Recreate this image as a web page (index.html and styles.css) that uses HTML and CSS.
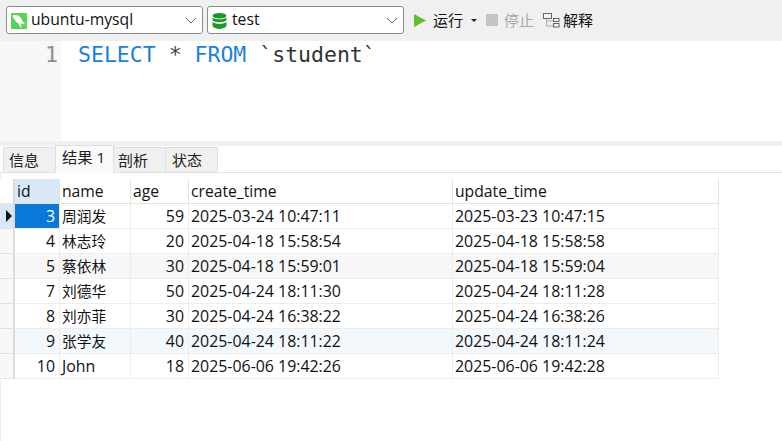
FILE: index.html
```html
<!DOCTYPE html>
<html lang="zh">
<head>
<meta charset="utf-8">
<title>ubuntu-mysql</title>
<link rel="stylesheet" href="styles.css">
</head>
<body>
<div class="toolbar">
  <div class="select conn">
    <svg class="sel-icon" width="16" height="16" viewBox="0 0 16 16"><rect width="16" height="16" rx="1" fill="#55d455"/><path d="M1.500 2.500c3-1 6-.5 8 2 1.500 2 2 4.500 4.500 6.500-1.500.5-3 0-4-1 0 1.500 0 3 1 4.500-2-.5-3-2-3.500-4C5 9.500 3 7 1.500 2.500z" fill="#fff"/></svg>
    <span class="sel-text">ubuntu-mysql</span>
    <svg class="chev" width="12" height="7" viewBox="0 0 12 7"><path d="M1 1l5 5 5-5" fill="none" stroke="#666" stroke-width="1"/></svg>
  </div>
  <div class="select db">
    <svg class="sel-icon" width="15" height="16" viewBox="0 0 15 16"><g fill="#1c9a28"><ellipse cx="7.500" cy="2.800" rx="7" ry="2.800"/><path d="M.5 4.500c2 2.400 12 2.400 14 0v2.700c-1.500 2.600-12.500 2.600-14 0z"/><path d="M.5 9c2 2.400 12 2.400 14 0v3.800c-1.500 4.200-12.500 4.200-14 0z"/></g></svg>
    <span class="sel-text">test</span>
    <svg class="chev" width="12" height="7" viewBox="0 0 12 7"><path d="M1 1l5 5 5-5" fill="none" stroke="#666" stroke-width="1"/></svg>
  </div>
  <div class="tool run">
    <svg width="12" height="13" viewBox="0 0 12 13"><path d="M0 0l12 6.500L0 13z" fill="#61bf2e"/></svg>
    <span>运行</span>
    <svg class="caret" width="6" height="3" viewBox="0 0 6 3"><path d="M0 0h6L3 3z" fill="#222"/></svg>
  </div>
  <div class="tool stop">
    <span class="stop-box"></span>
    <span>停止</span>
  </div>
  <div class="tool explain">
    <svg width="17" height="15" viewBox="0 0 17 15"><path d="M3.500 6v7h7M3.500 8h7" fill="none" stroke="#aaa"/><g fill="#f4f4f4" stroke="#666"><rect x=".5" y=".5" width="8" height="5"/><rect x="10.500" y="5.500" width="5.500" height="3"/><rect x="10.500" y="10.500" width="5.500" height="3.500"/></g></svg>
    <span>解释</span>
  </div>
</div>

<div class="editor">
  <div class="gutter">1</div>
  <div class="code"><span class="kw">SELECT</span> <span class="op">*</span> <span class="kw">FROM</span> `student`</div>
</div>

<div class="tabs">
  <div class="tab first-tab">信息</div>
  <div class="tab active">结果 1</div>
  <div class="tab third">剖析</div>
  <div class="tab">状态</div>
</div>

<div class="results">
  <table class="grid">
    <colgroup>
      <col class="c-mark"><col class="c-id"><col class="c-name"><col class="c-age"><col class="c-time"><col class="c-time2">
    </colgroup>
    <thead>
      <tr><th class="mark"></th><th class="head-id">id</th><th>name</th><th>age</th><th>create_time</th><th>update_time</th></tr>
    </thead>
    <tbody>
      <tr class="first"><td class="mark"><svg width="6" height="12" viewBox="0 0 6 12"><path d="M0 0l6 6-6 6z" fill="#111"/></svg></td><td class="num cur">3</td><td class="cjk">周润发</td><td class="num">59</td><td>2025-03-24 10:47:11</td><td>2025-03-23 10:47:15</td></tr>
      <tr><td class="mark"></td><td class="num">4</td><td class="cjk">林志玲</td><td class="num">20</td><td>2025-04-18 15:58:54</td><td>2025-04-18 15:58:58</td></tr>
      <tr class="alt"><td class="mark"></td><td class="num">5</td><td class="cjk">蔡依林</td><td class="num">30</td><td>2025-04-18 15:59:01</td><td>2025-04-18 15:59:04</td></tr>
      <tr><td class="mark"></td><td class="num">7</td><td class="cjk">刘德华</td><td class="num">50</td><td>2025-04-24 18:11:30</td><td>2025-04-24 18:11:28</td></tr>
      <tr><td class="mark"></td><td class="num">8</td><td class="cjk">刘亦菲</td><td class="num">30</td><td>2025-04-24 16:38:22</td><td>2025-04-24 16:38:26</td></tr>
      <tr class="hover"><td class="mark"></td><td class="num">9</td><td class="cjk">张学友</td><td class="num">40</td><td>2025-04-24 18:11:22</td><td>2025-04-24 18:11:24</td></tr>
      <tr><td class="mark"></td><td class="num">10</td><td>John</td><td class="num">18</td><td>2025-06-06 19:42:26</td><td>2025-06-06 19:42:28</td></tr>
    </tbody>
  </table>
</div>
</body>
</html>
```
FILE: styles.css
```css
* { box-sizing: border-box; }
html, body { margin: 0; height: 100%; overflow: hidden; }
body {
  background: #fff;
  color: #111;
  font: 15px/1 "Open Sans", "Noto Sans CJK SC", sans-serif;
  display: flex;
  flex-direction: column;
}
.toolbar {
  height: 41px;
  background: #f0f0f0;
  display: flex;
  align-items: flex-start;
  padding: 6px 0 0 6px;
  flex: none;
}
.select {
  width: 197px;
  height: 28px;
  background: #fff;
  border: 1px solid #8c8c8c;
  border-radius: 3px;
  display: flex;
  align-items: center;
  padding-left: 4px;
  margin-right: 4px;
  font-size: 15.700px;
}
.sel-icon { margin-top: 2px; }
.sel-text { margin-left: 4px; flex: 1; }
.db .sel-text { margin-left: 5px; }
.chev { margin-right: 5px; }
.tool {
  display: flex;
  align-items: center;
  height: 28px;
  font-size: 15px;
}
.run { margin-left: 6px; gap: 7px; }
.caret { margin-left: 1px; }
.stop { margin-left: 9px; gap: 6px; color: #aaa; }
.stop-box { width: 12px; height: 12px; background: #c4c4c4; }
.explain { margin-left: 9px; gap: 3px; }
.editor {
  height: 100px;
  display: flex;
  flex: none;
  font: 21.500px/28px "DejaVu Sans Mono", monospace;
}
.gutter {
  width: 61px;
  background: #f7f7f7;
  color: #8e8e8e;
  text-align: right;
  padding: 0 3px 0 0;
}
.code { padding-left: 17px; color: #333; white-space: pre; }
.kw { color: #1a7fe0; }
.op { color: #444; }
.tabs {
  height: 32px;
  flex: none;
  background: #fff;
  border-top: 5px solid #f0f0f0;
  border-bottom: 1px solid #e2e2e2;
  display: flex;
  align-items: flex-end;
  padding-left: 3px;
}
.tab {
  width: 53px;
  height: 26px;
  margin-bottom: -1px;
  margin-right: -1px;
  padding-left: 6px;
  background: #f0f0f0;
  border: 1px solid #e0e0e0;
  display: flex;
  align-items: center;
  color: #222;
}
.tab.first-tab { padding-left: 5px; }
.tab.active {
  width: 59px;
  height: 28px;
  padding-left: 6px;
  padding-bottom: 3px;
  background: #fafafa;
  border-bottom-color: #fafafa;
  font-size: 15.300px;
}
.tab.third { padding-left: 4px; }
.results {
  flex: 1;
  padding-top: 6px;
  border-left: 1px solid #ececec;
}
.grid {
  border-collapse: separate;
  border-spacing: 0;
  table-layout: fixed;
  width: 719px;
  font-size: 15.900px;
  margin-left: -1px;
}
.c-mark { width: 15px; }
.c-id { width: 45px; }
.c-name { width: 71px; }
.c-age { width: 58px; }
.c-time { width: 264px; }
.c-time2 { width: 266px; }
.grid th, .grid td {
  height: 25px;
  padding: 1px 2px 0;
  font-weight: 400;
  text-align: left;
  white-space: nowrap;
  border-right: 1px solid #ededed;
  border-bottom: 1px solid #ededed;
}
.grid th {
  font-size: 15.700px;
  border-right-color: #e2e2e2;
  border-bottom-color: #e2e2e2;
}
.grid .mark {
  background: #f8f8f8;
  border-right: 2px solid #dcdcdc;
  border-bottom-color: #e2e2e2;
  padding: 0 0 0 6px;
  line-height: 0;
}
.grid th.mark { background: #fff; }
.grid td.num { text-align: right; padding-right: 4px; }
.grid td.cjk { font-size: 14.700px; }
.grid th.head-id, .first .mark { background: #d9e8f6; }
.grid td.cur { background: #0a78d7; color: #fff; }
.alt td { background: #f7f7f7; }
.hover td { background: #f3f8fc; }
.alt .mark, .hover .mark { background: #f8f8f8; }
```
